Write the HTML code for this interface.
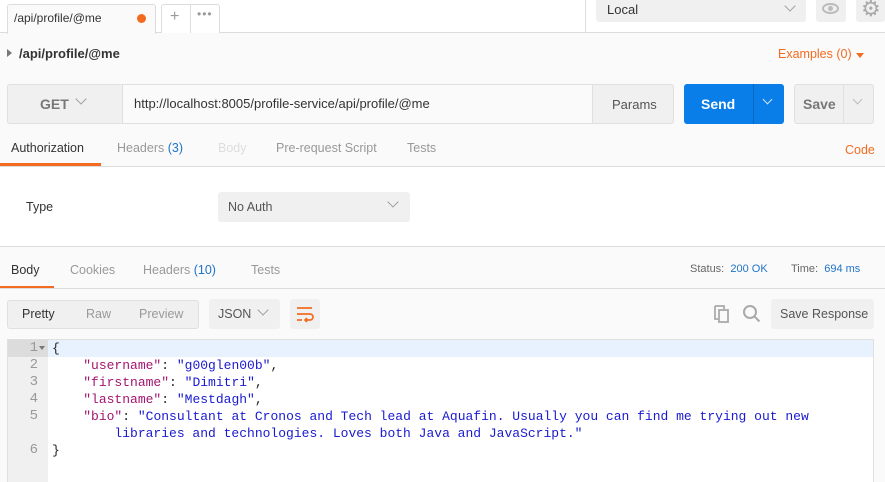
<!DOCTYPE html>
<html><head><meta charset="utf-8"><style>
*{margin:0;padding:0;box-sizing:border-box}
body{width:885px;height:482px;overflow:hidden;background:#fafafa;font-family:"Liberation Sans",sans-serif;font-size:13px;color:#505050;position:relative}
.a{position:absolute}
.btn{position:absolute;background:#f0f0f0;border:1px solid #e0e0e0;border-radius:3px}
.chev{position:absolute;width:8px;height:8px;border-right:1.5px solid #a0a0a0;border-bottom:1.5px solid #a0a0a0;transform:rotate(45deg)}
.mono{font-family:"Liberation Mono",monospace;font-size:13px}
.k{color:#a31570}.s{color:#1a1ad0}
</style></head><body>
<div class="a" style="left:0;top:0;width:885px;height:33px;background:#fff;border-bottom:1px solid #dcdcdc"></div>
<div class="a" style="left:7px;top:4px;width:149px;height:30px;background:#fafafa;border:1px solid #dcdcdc;border-bottom:none;border-radius:3px 3px 0 0"></div>
<div class="a" style="left:14px;top:11px;font-size:12px;color:#333">/api/profile/@me</div>
<div class="a" style="left:137px;top:14px;width:9px;height:9px;border-radius:50%;background:#f26b21"></div>
<div class="a" style="left:161px;top:4px;width:59px;height:29px;background:#fff;border:1px solid #dcdcdc;border-bottom:none;border-radius:3px 3px 0 0"></div>
<div class="a" style="left:190px;top:4px;width:1px;height:29px;background:#dcdcdc"></div>
<div class="a" style="left:170px;top:8px;font-size:16px;color:#999">+</div>
<div class="a" style="left:197px;top:7px;font-size:12px;color:#999;letter-spacing:1px">•••</div>
<div class="a" style="left:585px;top:0;width:1px;height:33px;background:#dcdcdc"></div>
<div class="a" style="left:596px;top:0;width:210px;height:22px;background:#f0f0f0;border-radius:0 0 3px 3px"></div>
<div class="a" style="left:607px;top:2px;font-size:13px;color:#333">Local</div>
<div class="chev" style="left:786px;top:2px"></div>
<div class="a" style="left:816px;top:0;width:30px;height:22px;background:#f0f0f0;border-radius:0 0 3px 3px"></div>
<div class="a" style="left:822px;top:3px;width:17px;height:11px;border:2px solid #bbb;border-radius:50%"></div>
<div class="a" style="left:828px;top:6px;width:5px;height:5px;background:#bbb;border-radius:50%"></div>
<div class="a" style="left:856px;top:0;width:29px;height:22px;background:#f0f0f0;border-radius:0 0 3px 3px"></div>
<div class="a" style="left:861px;top:-4px;font-size:22px;color:#aaa">⚙</div>
<div class="a" style="left:7px;top:49px;width:0;height:0;border-left:5px solid #777;border-top:4px solid transparent;border-bottom:4px solid transparent"></div>
<div class="a" style="left:19px;top:46px;font-size:13px;font-weight:bold;color:#333">/api/profile/@me</div>
<div class="a" style="left:778px;top:47px;font-size:12.5px;color:#f26b21">Examples (0)</div>
<div class="a" style="left:856px;top:53px;width:0;height:0;border-top:5px solid #f26b21;border-left:4px solid transparent;border-right:4px solid transparent"></div>
<div class="btn" style="left:7px;top:84px;width:667px;height:40px"></div>
<div class="a" style="left:122px;top:85px;width:471px;height:38px;background:#fafafa;border-left:1px solid #e0e0e0;border-right:1px solid #e0e0e0"></div>
<div class="a" style="left:40px;top:96px;font-size:14px;font-weight:bold;color:#777">GET</div>
<div class="chev" style="left:77px;top:95px"></div>
<div class="a" style="left:134px;top:96px;font-size:13px;color:#333">http://localhost:8005/profile-service/api/profile/@me</div>
<div class="a" style="left:612px;top:97px;font-size:13px;color:#555">Params</div>
<div class="a" style="left:684px;top:84px;width:100px;height:40px;background:#0a7ee8;border-radius:3px"></div>
<div class="a" style="left:753px;top:84px;width:1px;height:40px;background:#0669c4"></div>
<div class="a" style="left:701px;top:96px;font-size:14px;font-weight:bold;color:#fff">Send</div>
<div class="chev" style="left:764px;top:96px;border-color:#cfe4fa;width:7px;height:7px"></div>
<div class="btn" style="left:794px;top:84px;width:80px;height:40px"></div>
<div class="a" style="left:843px;top:85px;width:1px;height:38px;background:#e0e0e0"></div>
<div class="a" style="left:803px;top:96px;font-size:14px;font-weight:bold;color:#777">Save</div>
<div class="chev" style="left:854px;top:96px;width:7px;height:7px;border-color:#bbb"></div>
<div class="a" style="left:0;top:166px;width:885px;height:1px;background:#dcdcdc"></div>
<div class="a" style="left:0;top:163px;width:101px;height:3px;background:#f26b21"></div>
<div class="a" style="left:11px;top:141px;font-size:12.5px;color:#333">Authorization</div>
<div class="a" style="left:117px;top:141px;font-size:12.5px;color:#999">Headers <span style="color:#1f73c9">(3)</span></div>
<div class="a" style="left:218px;top:141px;font-size:12.5px;color:#ddd">Body</div>
<div class="a" style="left:276px;top:141px;font-size:12.5px;color:#999">Pre-request Script</div>
<div class="a" style="left:407px;top:141px;font-size:12.5px;color:#999">Tests</div>
<div class="a" style="left:845px;top:143px;font-size:12.5px;color:#f26b21">Code</div>
<div class="a" style="left:0;top:167px;width:885px;height:80px;background:#fff;border-bottom:1px solid #dcdcdc"></div>
<div class="a" style="left:26px;top:200px;font-size:12.5px;color:#333">Type</div>
<div class="a" style="left:218px;top:192px;width:192px;height:30px;background:#f0f0f0;border-radius:3px"></div>
<div class="a" style="left:228px;top:200px;font-size:12.5px;color:#555">No Auth</div>
<div class="chev" style="left:389px;top:198px"></div>
<div class="a" style="left:0;top:288px;width:885px;height:1px;background:#dcdcdc"></div>
<div class="a" style="left:0;top:286px;width:54px;height:2px;background:#f26b21"></div>
<div class="a" style="left:11px;top:263px;font-size:12.5px;color:#333">Body</div>
<div class="a" style="left:70px;top:263px;font-size:12.5px;color:#999">Cookies</div>
<div class="a" style="left:143px;top:263px;font-size:12.5px;color:#999">Headers <span style="color:#1f73c9">(10)</span></div>
<div class="a" style="left:251px;top:263px;font-size:12.5px;color:#999">Tests</div>
<div class="a" style="left:690px;top:263px;font-size:11px;color:#666">Status: <span style="color:#1f73c9">&nbsp;200 OK</span></div>
<div class="a" style="left:791px;top:263px;font-size:11px;color:#666">Time: <span style="color:#1f73c9">&nbsp;694 ms</span></div>
<div class="btn" style="left:7px;top:300px;width:192px;height:29px"></div>
<div class="a" style="left:22px;top:307px;font-size:12.5px;color:#333">Pretty</div>
<div class="a" style="left:86px;top:307px;font-size:12.5px;color:#999">Raw</div>
<div class="a" style="left:139px;top:307px;font-size:12.5px;color:#999">Preview</div>
<div class="a" style="left:209px;top:299px;width:71px;height:30px;background:#f0f0f0;border-radius:3px"></div>
<div class="a" style="left:218px;top:307px;font-size:12.5px;color:#555">JSON</div>
<div class="chev" style="left:259px;top:306px"></div>
<div class="a" style="left:290px;top:299px;width:30px;height:30px;background:#f0f0f0;border-radius:3px"></div>
<svg class="a" style="left:295px;top:305px" width="20" height="18" viewBox="0 0 20 18"><path d="M2 3h15M2 9h13a3 3 0 0 1 0 6h-5M2 15h5M12 13l-2 2 2 2" stroke="#f26b21" stroke-width="1.7" fill="none"/></svg>
<svg class="a" style="left:713px;top:304px" width="20" height="20" viewBox="0 0 20 20"><path d="M2 2h9v3M2 2v13h3" stroke="#aaa" stroke-width="1.8" fill="none"/><rect x="6" y="6" width="9" height="12" stroke="#aaa" stroke-width="1.8" fill="none"/></svg>
<svg class="a" style="left:742px;top:304px" width="20" height="20" viewBox="0 0 20 20"><circle cx="8" cy="8" r="6" stroke="#aaa" stroke-width="2" fill="none"/><path d="M12.5 12.5l5 5" stroke="#aaa" stroke-width="2"/></svg>
<div class="a" style="left:771px;top:299px;width:103px;height:30px;background:#f0f0f0;border-radius:3px"></div>
<div class="a" style="left:780px;top:307px;font-size:12.5px;color:#555">Save Response</div>
<div class="a" style="left:7px;top:339px;width:867px;height:143px;background:#fff;border:1px solid #e0e0e0;border-bottom:none"></div>
<div class="a" style="left:8px;top:340px;width:40px;height:142px;background:#f0f0f0"></div>
<div class="a" style="left:48px;top:340px;width:825px;height:17px;background:#e8f2ff"></div>
<div class="a" style="left:8px;top:340px;width:40px;height:17px;background:#dcdcdc"></div>
<div class="a mono" style="left:8px;top:340px;width:30px;line-height:17px;text-align:right;color:#999;font-size:14px">1<br>2<br>3<br>4<br>5<br><br>6</div>
<div class="a" style="left:39px;top:346px;width:0;height:0;border-top:4px solid #777;border-left:3px solid transparent;border-right:3px solid transparent"></div>
<pre class="a mono" style="left:52px;top:340px;line-height:17px;color:#222">{
    <span class="k">"username"</span>: <span class="s">"g00glen00b"</span>,
    <span class="k">"firstname"</span>: <span class="s">"Dimitri"</span>,
    <span class="k">"lastname"</span>: <span class="s">"Mestdagh"</span>,
    <span class="k">"bio"</span>: <span class="s">"Consultant at Cronos and Tech lead at Aquafin. Usually you can find me trying out new</span>
<span class="s">        libraries and technologies. Loves both Java and JavaScript."</span>
}</pre>
</body></html>
